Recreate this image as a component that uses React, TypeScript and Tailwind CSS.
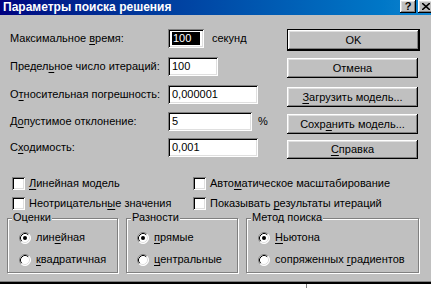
import type { ReactNode } from "react";

const raised =
  "bg-[#c0c0c0] shadow-[inset_-1px_-1px_0_#000000,inset_1px_1px_0_#ffffff,inset_-2px_-2px_0_#808080,inset_2px_2px_0_#dfdfdf]";
const sunken =
  "bg-white shadow-[inset_1px_1px_0_#808080,inset_-1px_-1px_0_#ffffff,inset_2px_2px_0_#000000,inset_-2px_-2px_0_#dfdfdf]";

// "&" marks the accelerator letter
function Acc({ text }: { text: string }) {
  const i = text.indexOf("&");
  if (i < 0) return <>{text}</>;
  return (
    <>
      {text.slice(0, i)}
      <span className="underline underline-offset-[2px]">{text[i + 1]}</span>
      {text.slice(i + 2)}
    </>
  );
}

function Field({
  label,
  width,
  value,
  after,
}: {
  label: string;
  width: string;
  value: ReactNode;
  after?: ReactNode;
}) {
  return (
    <div className="flex h-[19px] items-center">
      <span className="w-[158px] whitespace-nowrap">
        <Acc text={label} />
      </span>
      <div className={`${sunken} ${width} flex h-[19px] items-center pl-[4px]`}>
        {value}
      </div>
      {after}
    </div>
  );
}

function Button({ label, cls }: { label: string; cls: string }) {
  return (
    <div className={`${raised} ${cls} flex w-[131px] items-center justify-center`}>
      <Acc text={label} />
    </div>
  );
}

function Check({ label }: { label: string }) {
  return (
    <div className="flex h-[13px] items-center gap-[4px] whitespace-nowrap">
      <div className={`${sunken} h-[13px] w-[13px] shrink-0`} />
      <span>
        <Acc text={label} />
      </span>
    </div>
  );
}

function Radio({ label, on }: { label: string; on?: boolean }) {
  return (
    <div className="flex h-[13px] items-center gap-[5px] whitespace-nowrap">
      <svg width="12" height="12" viewBox="0 0 12 12" className="shrink-0">
        <circle cx="6" cy="6" r="5.5" fill="#ffffff" />
        <path d="M2.11 9.89 A5.5 5.5 0 0 1 9.89 2.11" fill="none" stroke="#808080" />
        <path d="M9.89 2.11 A5.5 5.5 0 0 1 2.11 9.89" fill="none" stroke="#ffffff" />
        <path d="M2.82 9.18 A4.5 4.5 0 0 1 9.18 2.82" fill="none" stroke="#000000" />
        <path d="M9.18 2.82 A4.5 4.5 0 0 1 2.82 9.18" fill="none" stroke="#dfdfdf" />
        {on && <circle cx="6" cy="6" r="2" fill="#000000" />}
      </svg>
      <span>
        <Acc text={label} />
      </span>
    </div>
  );
}

function Group({
  title,
  cls,
  children,
}: {
  title: string;
  cls: string;
  children: ReactNode;
}) {
  return (
    <div
      className={`relative h-[55px] border border-[#808080] shadow-[inset_1px_1px_0_#ffffff,1px_1px_0_#ffffff] ${cls}`}
    >
      <span className="absolute left-[4px] top-[-8px] bg-[#c0c0c0] px-[1px] leading-[13px]">
        {title}
      </span>
      <div className="flex flex-col gap-[9px] pt-[12px]">{children}</div>
    </div>
  );
}

export default function App() {
  return (
    <div className="relative h-[288px] w-[431px] overflow-hidden bg-[#c0c0c0] font-['Liberation_Sans',Arial,sans-serif] text-[11px] leading-[13px] text-black">
      {/* title bar */}
      <div className="flex h-[15px] bg-linear-to-r from-[#000080] to-[#1084d0] pl-[3px]">
        <span className="self-center text-[12px] font-bold leading-[15px] text-white">
          Параметры поиска решения
        </span>
        <div className="ml-auto mr-[-3px] flex gap-[2px]">
          <div className={`${raised} flex h-[13px] w-[16px] items-center justify-center text-[11px] font-bold`}>
            ?
          </div>
          <div className={`${raised} flex h-[13px] w-[16px] items-center justify-center`}>
            <svg width="8" height="7" viewBox="0 0 8 7">
              <path d="M0 0 L8 7 M8 0 L0 7" stroke="#000" strokeWidth="1.6" />
            </svg>
          </div>
        </div>
      </div>

      {/* body */}
      <div className="flex h-[266px] flex-col">
        <div className="flex h-[162px] pl-[10px]">
          <div className="flex w-[277px] flex-col">
            <div className="mt-[14px]">
              <Field
                label="Максимальное &время:"
                width="w-[36px]"
                value={
                  <span className="h-[13px] w-[28px] bg-black pl-[1px] text-white">100</span>
                }
                after={<span className="ml-[8px]">секунд</span>}
              />
            </div>
            <div className="mt-[9px]">
              <Field label="Предел&ьное число итераций:" width="w-[50px]" value="100" />
            </div>
            <div className="mt-[9px]">
              <Field label="О&тносительная погрешность:" width="w-[90px]" value="0,000001" />
            </div>
            <div className="mt-[8px]">
              <Field
                label="Д&опустимое отклонение:"
                width="w-[84px]"
                value="5"
                after={<span className="ml-[6px]">%</span>}
              />
            </div>
            <div className="mt-[7px]">
              <Field label="С&ходимость:" width="w-[90px]" value="0,001" />
            </div>
          </div>

          <div className="flex flex-col">
            <div className="mt-[14px] flex h-[22px] w-[133px] border border-black">
              <div className={`${raised} flex flex-1 items-center justify-center`}>OK</div>
            </div>
            <Button label="Отмена" cls="mt-[7px] h-[20px]" />
            <Button label="&Загрузить модель..." cls="mt-[9px] h-[20px]" />
            <Button label="Сохр&анить модель..." cls="mt-[7px] h-[20px]" />
            <Button label="&Справка" cls="mt-[6px] h-[19px]" />
          </div>
        </div>

        <div className="grid grid-cols-[181px_1fr] gap-y-[7px] pl-[12px]">
          <Check label="&Линейная модель" />
          <Check label="Авто&матическое масштабирование" />
          <Check label="Неотрицательн&ые значения" />
          <Check label="Показывать &результаты итераций" />
        </div>

        <div className="mt-[8px] flex gap-[8px] pl-[7px]">
          <Group title="Оценки" cls="w-[111px] pl-[11px]">
            <Radio label="лин&ейная" on />
            <Radio label="&квадратичная" />
          </Group>
          <Group title="Разности" cls="w-[112px] pl-[10px]">
            <Radio label="&прямые" on />
            <Radio label="&центральные" />
          </Group>
          <Group title="Метод поиска" cls="w-[173px] pl-[11px]">
            <Radio label="&Ньютона" on />
            <Radio label="сопряженных &градиентов" />
          </Group>
        </div>
      </div>

      {/* window bottom edge and what lies below */}
      <div className="h-[1px] bg-[#808080]" />
      <div className="h-[2px] bg-[#000000]" />
      <div className="flex h-[4px] bg-white">
        <div className="w-[306px]" />
        <div className="w-[1px] bg-[#808080]" />
      </div>
    </div>
  );
}
